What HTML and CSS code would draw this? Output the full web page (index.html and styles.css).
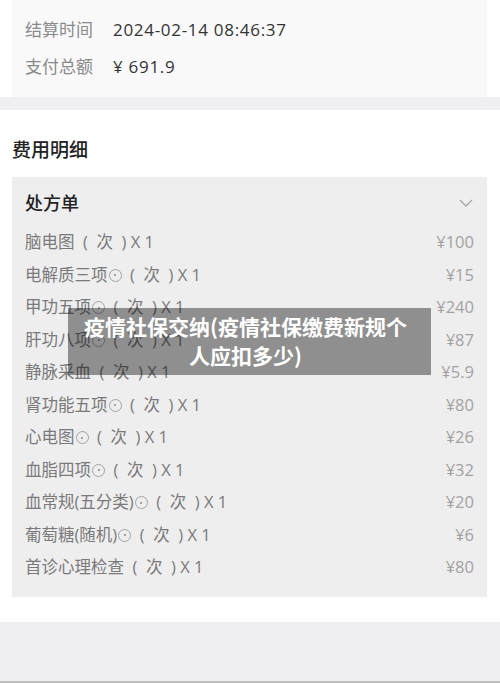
FILE: index.html
```html
<!DOCTYPE html>
<html lang="zh-CN">
<head>
    <meta charset="UTF-8">
    <meta name="viewport" content="width=device-width, initial-scale=1.0">
    <title>费用明细</title>
    <link rel="stylesheet" href="styles.css">
</head>
<body>
    <div class="summary">
        <div class="summary-row">
            <span class="summary-label">结算时间</span>
            <span class="summary-value">2024-02-14 08:46:37</span>
        </div>
        <div class="summary-row">
            <span class="summary-label">支付总额</span>
            <span class="summary-value">¥ 691.9</span>
        </div>
    </div>
    <div class="divider"></div>

    <section class="detail">
        <h2 class="detail-title">费用明细</h2>
        <div class="card">
            <div class="card-header">
                <span>处方单</span>
                <svg class="chevron" width="14" height="8" viewBox="0 0 14 8">
                    <polyline points="1,1 7,7 13,1" fill="none" stroke="#a6a6a6" stroke-width="1.3"/>
                </svg>
            </div>
            <ul class="items">
                <li><span>脑电图&nbsp; (&nbsp; 次&nbsp; ) X 1</span><span class="price">¥100</span></li>
                <li><span>电解质三项<i class="dot"></i>&nbsp; (&nbsp; 次&nbsp; ) X 1</span><span class="price">¥15</span></li>
                <li><span>甲功五项<i class="dot"></i>&nbsp; (&nbsp; 次&nbsp; ) X 1</span><span class="price">¥240</span></li>
                <li><span>肝功八项<i class="dot"></i>&nbsp; (&nbsp; 次&nbsp; ) X 1</span><span class="price">¥87</span></li>
                <li><span>静脉采血&nbsp; (&nbsp; 次&nbsp; ) X 1</span><span class="price">¥5.9</span></li>
                <li><span>肾功能五项<i class="dot"></i>&nbsp; (&nbsp; 次&nbsp; ) X 1</span><span class="price">¥80</span></li>
                <li><span>心电图<i class="dot"></i>&nbsp; (&nbsp; 次&nbsp; ) X 1</span><span class="price">¥26</span></li>
                <li><span>血脂四项<i class="dot"></i>&nbsp; (&nbsp; 次&nbsp; ) X 1</span><span class="price">¥32</span></li>
                <li><span>血常规(五分类)<i class="dot"></i>&nbsp; (&nbsp; 次&nbsp; ) X 1</span><span class="price">¥20</span></li>
                <li><span>葡萄糖(随机)<i class="dot"></i>&nbsp; (&nbsp; 次&nbsp; ) X 1</span><span class="price">¥6</span></li>
                <li><span>首诊心理检查&nbsp; (&nbsp; 次&nbsp; ) X 1</span><span class="price">¥80</span></li>
            </ul>
        </div>
    </section>

    <div class="footer-band"></div>

    <div class="caption">疫情社保交纳(疫情社保缴费新规个人应扣多少)</div>
</body>
</html>
```

FILE: styles.css
```css
body {
    font-family: "Open Sans", "Noto Sans CJK SC", sans-serif;
    background-color: #ffffff;
    margin: 0;
    padding: 0;
    position: relative;
    height: 683px;
    overflow: hidden;
}

.summary {
    margin: 0 13px 0 12px;
    padding: 11px 13px 12px;
    background-color: #f9f9f9;
}

.summary-row {
    display: flex;
    line-height: 37px;
    font-size: 17px;
}

.summary-label {
    color: #8a8a8a;
    width: 88px;
}

.summary-value {
    color: #333333;
    letter-spacing: 0.7px;
}

.divider {
    height: 13px;
    background-color: #efeff2;
}

.detail {
    padding: 0 13px 0 12px;
}

.detail-title {
    margin: 26px 0 13px;
    font-size: 19px;
    line-height: 28px;
    font-weight: 500;
    color: #222222;
}

.card {
    background-color: #eeeeee;
    padding: 8px 13px 13px;
}

.card-header {
    display: flex;
    justify-content: space-between;
    align-items: center;
    line-height: 36px;
    font-size: 18px;
    font-weight: 500;
    color: #222222;
    margin-bottom: 5px;
}

.chevron {
    margin-right: 1px;
}

.items {
    list-style: none;
    margin: 0;
    padding: 0;
}

.items li {
    display: flex;
    justify-content: space-between;
    height: 32.5px;
    line-height: 32.5px;
    font-size: 16.5px;
    color: #7a7a7a;
}

.dot {
    display: inline-block;
    position: relative;
    width: 11px;
    height: 11px;
    margin-left: 1px;
    border: 1px solid #a3a3a3;
    border-radius: 50%;
    vertical-align: -1px;
}

.dot::after {
    content: "";
    position: absolute;
    left: 4.5px;
    top: 4.5px;
    width: 2px;
    height: 2px;
    border-radius: 50%;
    background-color: #8a8a8a;
}

.price {
    color: #a2a2a2;
}

.footer-band {
    margin-top: 25px;
    height: 59px;
    background-color: #efeff2;
    border-bottom: 2px solid #bdbdbd;
}

.caption {
    position: absolute;
    left: 68px;
    top: 308px;
    width: 331px;
    padding: 4px 20px 4px 12px;
    min-height: 59px;
    background-color: rgba(0, 0, 0, 0.4);
    color: #ffffff;
    font-family: "Noto Sans CJK SC", sans-serif;
    font-size: 21px;
    font-weight: bold;
    line-height: 29px;
    text-align: center;
}
```
